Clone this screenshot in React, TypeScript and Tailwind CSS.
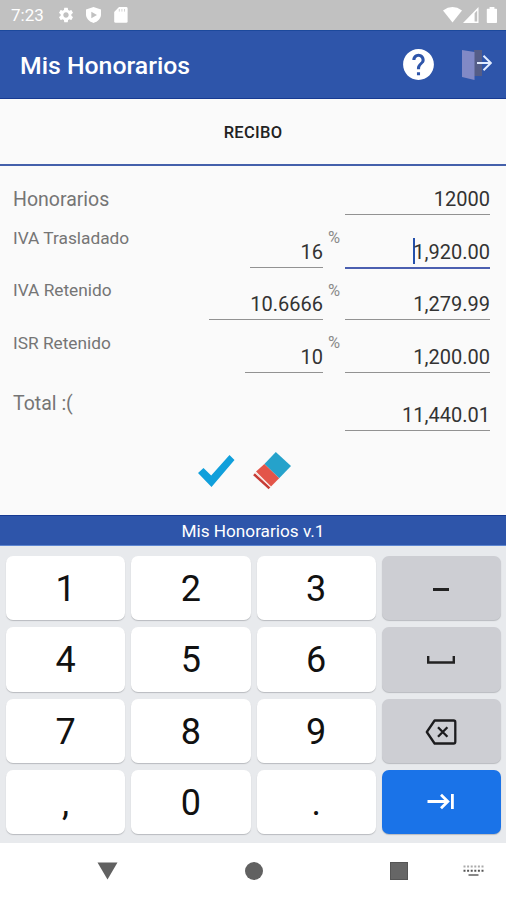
import { useState } from "react";
import { MdHelp, MdSettings } from "react-icons/md";

const rows = [
  { label: "Honorarios", amount: "12000", labelStyle: "text-[19.5px] pt-[22px]", height: "h-[49px]" },
  { label: "IVA Trasladado", pct: "16", amount: "1,920.00", pctWidth: "w-[73px]", labelStyle: "text-[17.3px] pt-[11px]", height: "h-[53px]" },
  { label: "IVA Retenido", pct: "10.6666", amount: "1,279.99", pctWidth: "w-[114px]", labelStyle: "text-[17.3px] pt-[10px]", height: "h-[52px]" },
  { label: "ISR Retenido", pct: "10", amount: "1,200.00", pctWidth: "w-[78px]", labelStyle: "text-[17.3px] pt-[11px]", height: "h-[53px]" },
  { label: "Total :(", amount: "11,440.01", labelStyle: "text-[19.5px] pt-[19px]", height: "h-[58px]" },
];

const keys = ["1", "2", "3", "minus", "4", "5", "6", "space", "7", "8", "9", "delete", ",", "0", ".", "next"];

function StatusBar() {
  return (
    <div className="h-[30px] bg-[#c1c1c1] flex items-center justify-between pl-[11px] pr-[8px] text-white">
      <div className="flex items-center">
        <span className="w-[46px] text-[17px] leading-none pt-px">7:23</span>
        <MdSettings className="size-[18px]" />
        <svg className="ml-[11px] w-[15px] h-[16px]" viewBox="0 0 15 16">
          <path d="M7.5 0L15 2.6V7.6C15 11.6 11.8 14.8 7.5 16C3.2 14.8 0 11.6 0 7.6V2.6Z" fill="#fff" />
          <path d="M5.3 4.8L11 8L5.3 11.2Z" fill="#c1c1c1" />
        </svg>
        <svg className="ml-[13px] w-[14px] h-[16px]" viewBox="0 0 14 16">
          <path d="M5 0H12.2Q13.6 0 13.6 1.4V14.4Q13.6 15.8 12.2 15.8H1.6Q.2 15.8 .2 14.4V5Z" fill="#fff" />
          <path d="M5.3 2V4.6M7.9 2V4.6M10.5 2V4.6" stroke="#d4d4d4" strokeWidth="1" />
        </svg>
      </div>
      <div className="flex items-center">
        <svg className="w-[19px] h-[16px]" viewBox="0 0 19 16">
          <path d="M0 3.4Q9.5 -3.4 19 3.4L9.5 15.5Z" fill="#fff" />
        </svg>
        <svg className="ml-[1px] w-[16px] h-[16px]" viewBox="0 0 16 16">
          <path d="M15.5 0V16H0ZM11.6 6.2V14.6H14.2V3.6Z" fill="#fff" fillRule="evenodd" />
        </svg>
        <svg className="ml-[7px] w-[12px] h-[16px]" viewBox="0 0 12 16">
          <path d="M3.6 0H8.4V1.8H10.4Q11 1.8 11 2.6V15.2Q11 16 10.2 16H1.6Q.8 16 .8 15.2V2.6Q.8 1.8 1.6 1.8H3.6Z" fill="#fff" />
        </svg>
      </div>
    </div>
  );
}

function KeyFace({ name }: { name: string }) {
  switch (name) {
    case "minus":
      return (
        <svg className="w-[16px] h-[3px] mt-[2px]" viewBox="0 0 16 3">
          <path d="M0 1.5H16" stroke="#222" strokeWidth="3" />
        </svg>
      );
    case "space":
      return (
        <svg className="w-[28px] h-[8px] mt-[2px]" viewBox="0 0 28 8">
          <path d="M1.2 0V6.5H26.8V0" fill="none" stroke="#222" strokeWidth="2.4" />
        </svg>
      );
    case "delete":
      return (
        <svg className="w-[32px] h-[26px] mt-[2px]" viewBox="0 0 32 26">
          <path
            d="M9.6 1.5H28.6Q30.3 1.5 30.3 3.2V22.8Q30.3 24.5 28.6 24.5H9.6L1.8 13Z"
            fill="none"
            stroke="#1c1c1e"
            strokeWidth="2.3"
            strokeLinejoin="round"
          />
          <path d="M13 8.2L22.4 17.8M22.4 8.2L13 17.8" stroke="#1c1c1e" strokeWidth="2.3" />
        </svg>
      );
    case "next":
      return (
        <svg className="w-[28px] h-[17px]" viewBox="0 0 28 17">
          <path d="M.5 8.5H20.5M14 1.8L20.8 8.5L14 15.2M25.4 1V16" fill="none" stroke="#fff" strokeWidth="2.8" />
        </svg>
      );
    default:
      return <span className="pt-[2px]">{name}</span>;
  }
}

function keyColor(name: string) {
  if (name === "next") return "bg-[#1a73e8]";
  if (name.length > 1) return "bg-[#cdced3]";
  return "bg-white";
}

export default function App() {
  const [focused, setFocused] = useState("IVA Trasladado");

  return (
    <div className="w-[506px] h-[900px] overflow-hidden flex flex-col bg-[#fafafa] font-[Roboto,sans-serif]">
      <StatusBar />

      {/* HEADER */}
      <header className="h-[69px] bg-[#2e55aa] border-t border-b border-t-[#1c499c] border-b-[#173a92] flex items-center pl-[20px] pr-[14px] text-white">
        <h1 className="flex-1 text-[24.8px] font-medium leading-none pt-[3px]">Mis Honorarios</h1>
        <MdHelp className="size-[37px] mr-[24px]" />
        <svg className="w-[31px] h-[32px]" viewBox="0 0 31 32">
          <path d="M13 1H21V27H13Z" fill="#555d87" />
          <path d="M1 1L13.5 3V31L1 28Z" fill="#8189c6" />
          <path d="M16 14H30M22.5 6.8L29.8 14L22.5 21.2" fill="none" stroke="#e2ecff" strokeWidth="2" />
        </svg>
      </header>

      {/* TABS */}
      <div className="h-[67px] border-b-2 border-[#4460ab] flex items-center justify-center pt-[4px] text-[16.5px] tracking-[0.3px] font-medium text-[#222]">
        RECIBO
      </div>

      {/* FORM */}
      <main className="h-[349px] pl-[13px] pr-[16px]">
        {rows.map((row) => {
          const active = row.label === focused;
          return (
            <div key={row.label} className={`flex items-end ${row.height}`}>
              <span className={`flex-1 self-start text-[#757575] leading-[24px] ${row.labelStyle}`}>{row.label}</span>
              {row.pct && (
                <>
                  <div className={`${row.pctWidth} border-b border-[#929292] pb-[3px] text-right text-[20px] leading-[24px] text-[#333]`}>
                    {row.pct}
                  </div>
                  <span className="w-[22px] self-start pt-[11px] pl-[5px] text-[16.5px] leading-[24px] text-[#8a8a8a]">%</span>
                </>
              )}
              <div
                onClick={() => setFocused(row.label)}
                className={`w-[145px] flex justify-end text-[20px] leading-[24px] text-[#333] ${
                  active ? "-mb-px border-b-2 border-[#4b5fb0] pb-[3px]" : "border-b border-[#929292] pb-[3px]"
                }`}
              >
                {active && <span className="w-[2px] h-[26px] -mt-[2px] -mb-px -mr-[2px] bg-[#2450ab]" />}
                {row.amount}
              </div>
            </div>
          );
        })}

        <div className="flex justify-center items-center gap-[18px] pt-[21px] pr-[14px]">
          <svg className="w-[37px] h-[33px]" viewBox="0 0 37 33">
            <path d="M0 18L5.5 13L13.2 20.4L31.5 0L36.5 5L13.5 32Z" fill="#109fdb" />
          </svg>
          <svg className="w-[38px] h-[38px]" viewBox="0 0 38 38">
            <path d="M22.8 0L38 13.9L26.2 26.2L11.4 12Z" fill="#25a2cb" />
            <path d="M11.4 12L26.2 26.2L18 34.5L3 19.6Z" fill="#e35549" />
            <path d="M1 22.2L16.5 36.2" stroke="#c63c35" strokeWidth="2.6" />
            <path d="M2.2 20.5L17.6 34.9" stroke="#f8dfda" strokeWidth="1.2" />
          </svg>
        </div>
      </main>

      <footer className="h-[31px] bg-[#2e55aa] border-t border-t-[#173a92] border-b border-b-[#5e86d0] flex items-center justify-center pt-[3px] text-[17.2px] text-white">
        Mis Honorarios v.1
      </footer>

      {/* KEYBOARD */}
      <div className="h-[297px] bg-[#e8eaed] pt-[10px] pb-[9px] pl-[6px] pr-[5px] grid grid-cols-4 grid-rows-4 gap-x-[6px] gap-y-[7px]">
        {keys.map((name) => (
          <button
            key={name}
            className={`rounded-[7px] shadow-[0_1px_1px_#b9bbbf] flex items-center justify-center text-[36px] leading-none text-[#111] ${keyColor(name)}`}
          >
            <KeyFace name={name} />
          </button>
        ))}
      </div>

      {/* SYSTEM NAVIGATION */}
      <nav className="h-[57px] bg-white flex items-center pl-[97px] pr-[22px] pb-[2px]">
        <svg className="w-[21px] h-[18px]" viewBox="0 0 21 18">
          <path d="M.5 .5H20.5L10.5 17.5Z" fill="#616161" />
        </svg>
        <div className="ml-[127px] size-[18px] rounded-full bg-[#616161]" />
        <div className="ml-[127px] size-[18px] bg-[#666] border border-[#555]" />
        <svg className="ml-[55px] w-[21px] h-[12px]" viewBox="0 0 21 12">
          <path d="M.5 1.5H20.5" stroke="#aaa" strokeWidth="2" strokeDasharray="2 1.6" />
          <path d="M.5 5.8H20.5" stroke="#555" strokeWidth="2" strokeDasharray="2 1.6" />
          <path d="M5.5 10H15.5" stroke="#888" strokeWidth="2" />
        </svg>
      </nav>
    </div>
  );
}
